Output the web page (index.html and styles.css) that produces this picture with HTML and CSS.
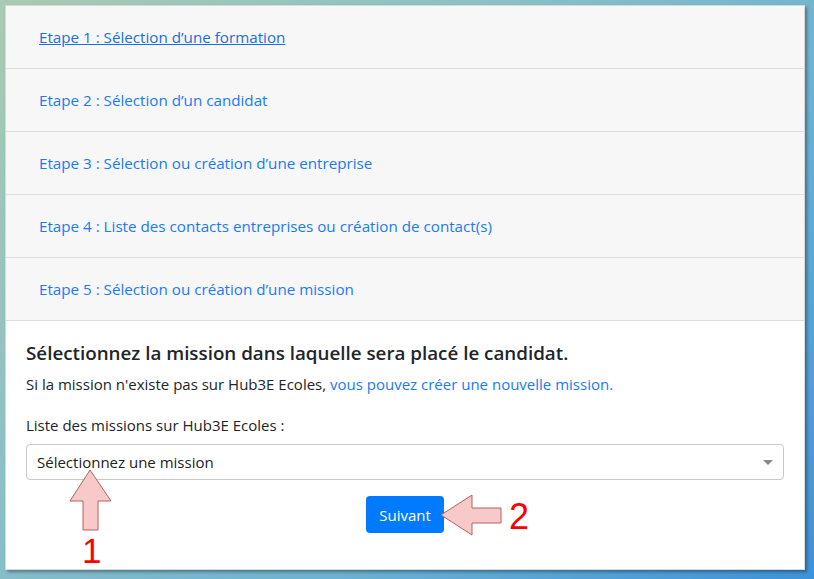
FILE: index.html
```html
<!DOCTYPE html>
<html lang="fr">
<head>
<meta charset="utf-8">
<link rel="stylesheet" href="styles.css">
</head>
<body>
<div class="panel">
  <div class="step"><a class="active" href="#">Etape 1 : Sélection d’une formation</a></div>
  <div class="step"><a href="#">Etape 2 : Sélection d’un candidat</a></div>
  <div class="step"><a href="#">Etape 3 : Sélection ou création d’une entreprise</a></div>
  <div class="step"><a href="#">Etape 4 : Liste des contacts entreprises ou création de contact(s)</a></div>
  <div class="step"><a href="#">Etape 5 : Sélection ou création d’une mission</a></div>
  <div class="content">
    <h2 class="title">Sélectionnez la mission dans laquelle sera placé le candidat.</h2>
    <p class="info">Si la mission n'existe pas sur Hub3E Ecoles, <a href="#">vous pouvez créer une nouvelle mission.</a></p>
    <div class="label">Liste des missions sur Hub3E Ecoles :</div>
    <div class="select"><span>Sélectionnez une mission</span><span class="caret"></span></div>
    <div class="actions"><button class="btn">Suivant</button></div>
  </div>
</div>
<svg class="arrows" width="814" height="579" viewBox="0 0 814 579">
  <polygon points="90,470 111,501 98,501 98,530 83,530 83,501 70,501" fill="#f7c9c8" stroke="#b9605d" stroke-width="1"/>
  <polygon points="441,515 472,495 472,508 501,508 501,523 472,523 472,535" fill="#f7c9c8" stroke="#b9605d" stroke-width="1"/>
</svg>
<div class="num num1">1</div>
<div class="num num2">2</div>
</body>
</html>
```
FILE: styles.css
```css
html, body {
  margin: 0;
  padding: 0;
}
body {
  width: 814px;
  height: 579px;
  box-sizing: border-box;
  padding: 5px 0 0 5px;
  background: linear-gradient(135deg, #aacab2 0%, #8cc0c6 35%, #6db2d2 65%, #3d93d9 100%);
  font-family: "Open Sans", "Noto Sans", sans-serif;
  overflow: hidden;
  position: relative;
}
.panel {
  width: 800px;
  height: 565px;
  box-sizing: border-box;
  background: #fff;
  border: 1px solid #d9d9d9;
  box-shadow: 2px 2px 3px rgba(0, 0, 0, 0.35);
}
.step {
  height: 62px;
  border-bottom: 1px solid #dedede;
  background: #f7f7f7;
  display: flex;
  align-items: center;
  padding-left: 33px;
}
.step a {
  color: #1a7bf0;
  text-decoration: none;
  font-size: 15.2px;
}
.step a.active {
  text-decoration: underline;
  color: #1a6fd8;
}
.content {
  padding: 0 20px;
  color: #212529;
}
.title {
  margin: 20px 0 0;
  font-size: 18.8px;
  line-height: 24px;
  font-weight: 600;
}
.info {
  margin: 7px 0 0;
  font-size: 15px;
  line-height: 24px;
}
.info a {
  color: #1a7bf0;
  text-decoration: none;
}
.label {
  margin-top: 17px;
  font-size: 15px;
  line-height: 24px;
}
.select {
  margin-top: 7px;
  height: 36px;
  box-sizing: border-box;
  border: 1px solid #c8c8c8;
  border-radius: 4px;
  display: flex;
  align-items: center;
  justify-content: space-between;
  padding: 0 10px 0 10px;
  font-size: 15px;
  color: #222;
}
.caret {
  width: 0;
  height: 0;
  border-left: 5px solid transparent;
  border-right: 5px solid transparent;
  border-top: 5px solid #888;
}
.actions {
  margin-top: 16px;
  display: flex;
  justify-content: center;
}
.btn {
  width: 78px;
  height: 37px;
  border: none;
  border-radius: 4px;
  background: #007bff;
  color: #fff;
  font-family: "Open Sans", "Noto Sans", sans-serif;
  font-size: 15px;
  padding: 0;
}
.arrows {
  position: absolute;
  left: 0;
  top: 0;
}
.num {
  position: absolute;
  color: #ff0000;
  font-family: "Liberation Sans", Arial, sans-serif;
  font-size: 35px;
  line-height: 1;
}
.num1 {
  left: 82px;
  top: 533px;
}
.num2 {
  left: 509px;
  top: 499px;
  font-size: 36px;
}
```
